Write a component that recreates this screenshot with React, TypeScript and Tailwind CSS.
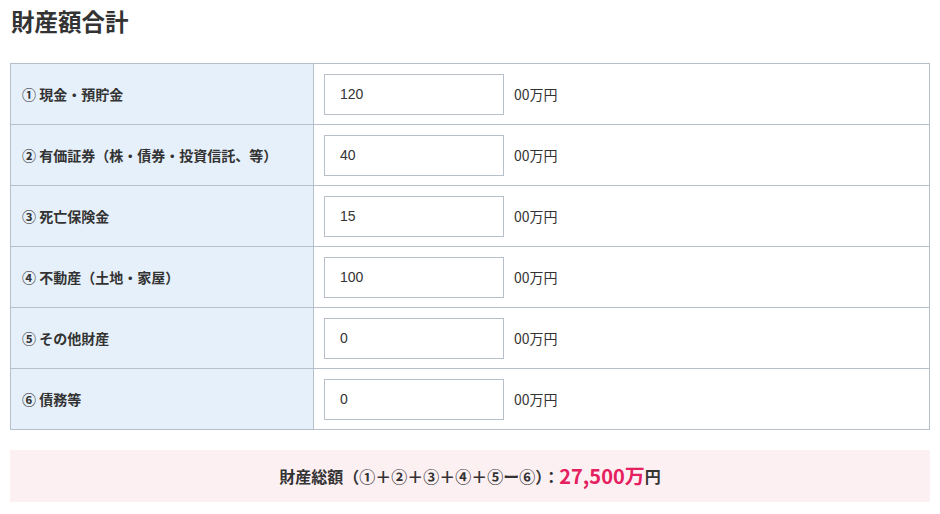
import { useState } from "react";

// 財産額合計フォーム
const ROWS = [
  { label: "① 現金・預貯金", value: "120" },
  { label: "② 有価証券（株・債券・投資信託、等）", value: "40" },
  { label: "③ 死亡保険金", value: "15" },
  { label: "④ 不動産（土地・家屋）", value: "100" },
  { label: "⑤ その他財産", value: "0" },
  { label: "⑥ 債務等", value: "0" },
];

const FONT = {
  fontFamily:
    '"Noto Sans CJK JP", "Noto Sans", "Liberation Sans", sans-serif',
};

export default function App() {
  const [values, setValues] = useState(ROWS.map((r) => r.value));

  return (
    <div className="bg-white w-[940px] h-[514px] px-[10px] text-[#333]" style={FONT}>
      <h2 className="text-[23.5px] font-bold leading-none pt-[10px] pl-[1px] h-[63px]">
        財産額合計
      </h2>

      <table className="w-full border-collapse">
        <tbody>
          {ROWS.map((row, i) => (
            <tr key={row.label} className="h-[61px]">
              <th className="w-[303px] bg-[#e6f0fa] border border-[#b7c0ca] text-left pl-[11px] text-[14px] font-bold">
                {row.label}
              </th>
              <td className="border border-[#b7c0ca] pl-[10px]">
                <div className="flex items-center">
                  <input
                    className="w-[180px] h-[41px] border border-[#b7c0ca] pl-[15px] text-[14px] outline-none"
                    style={{ fontFamily: '"Liberation Sans", sans-serif' }}
                    value={values[i]}
                    onChange={(e) => {
                      const next = [...values];
                      next[i] = e.target.value;
                      setValues(next);
                    }}
                  />
                  <span className="ml-[10px] text-[14px]">00万円</span>
                </div>
              </td>
            </tr>
          ))}
        </tbody>
      </table>

      <div className="mt-[20px] h-[52px] bg-[#fdf0f3] flex items-center justify-center text-[16px] font-bold">
        <span>財産総額（①＋②＋③＋④＋⑤ー⑥）：</span>
        <span className="text-[#e5205e] text-[20px]">27,500万</span>
        <span>円</span>
      </div>
    </div>
  );
}
